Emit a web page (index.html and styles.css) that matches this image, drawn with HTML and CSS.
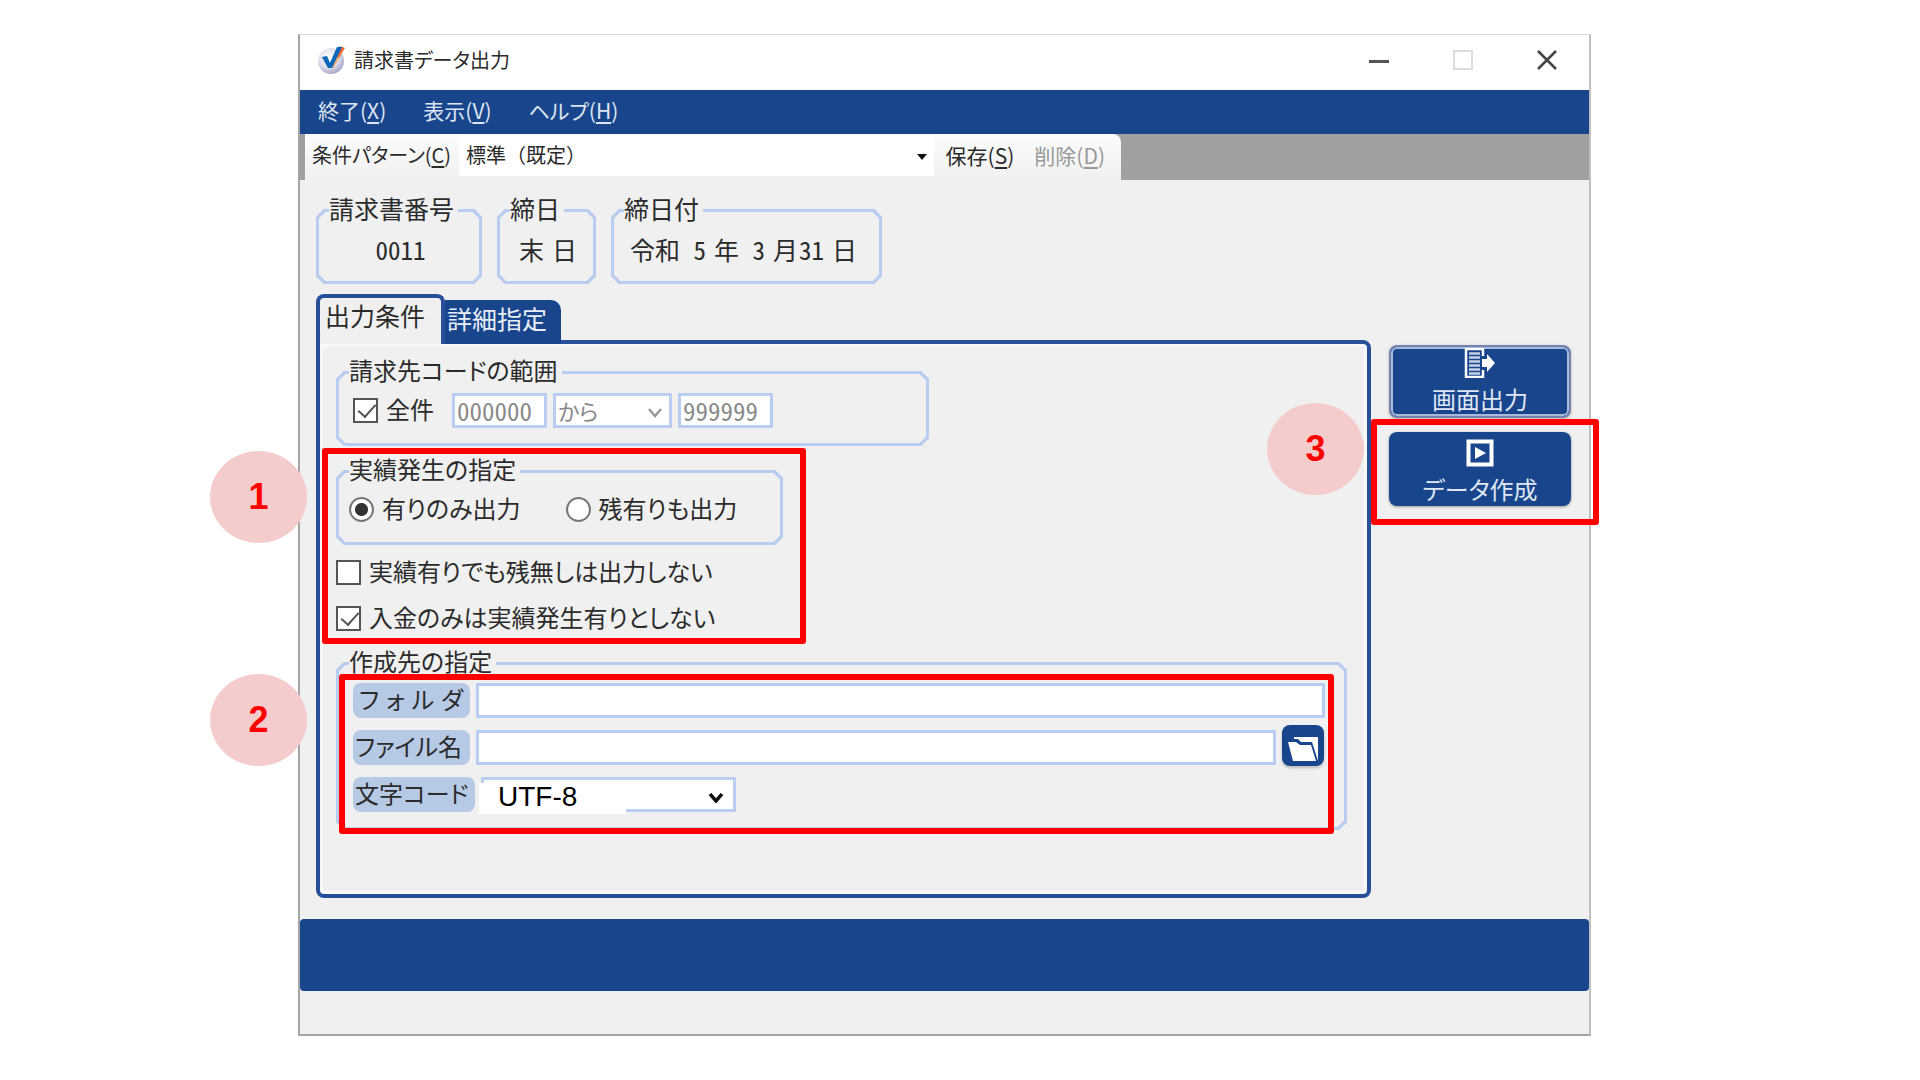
FILE: index.html
```html
<!DOCTYPE html>
<html lang="ja">
<head>
<meta charset="utf-8">
<title>請求書データ出力</title>
<link rel="stylesheet" href="styles.css">
</head>
<body>
<div class="stage">
  <div class="window">
    <header class="titlebar">
      <svg class="app-icon" viewBox="0 0 28 28" aria-hidden="true">
        <defs><radialGradient id="ball" cx="0.4" cy="0.35" r="0.65"><stop offset="0" stop-color="#fff"/><stop offset="0.65" stop-color="#dcdcea"/><stop offset="1" stop-color="#a9a9cc"/></radialGradient></defs>
        <circle cx="14" cy="15" r="13" fill="url(#ball)"/>
        <path d="M23 0l5 2-12 20-4-1z" fill="#f26a35"/>
        <path d="M13 22l7-12 2 2-6 10z" fill="#f8b070"/>
        <path d="M5 11l5-1 3 7L20 1h5L15 22h-4z" fill="#0a66b8"/>
      </svg>
      <h1 class="title">請求書データ出力</h1>
      <div class="window-buttons">
        <button type="button" class="window-button" aria-label="最小化"><svg viewBox="0 0 20 20"><path d="M0 11.500h20" stroke="#555" stroke-width="3"/></svg></button>
        <button type="button" class="window-button" aria-label="最大化" disabled><svg viewBox="0 0 20 20"><rect x="1" y="1" width="18" height="18" fill="none" stroke="#dcdcdc" stroke-width="2"/></svg></button>
        <button type="button" class="window-button" aria-label="閉じる"><svg viewBox="0 0 20 20"><path d="M1 1l18 18M19 1L1 19" stroke="#444" stroke-width="2.500"/></svg></button>
      </div>
    </header>

    <nav class="menubar">
      <button type="button" class="menu">終了(<u>X</u>)</button>
      <button type="button" class="menu">表示(<u>V</u>)</button>
      <button type="button" class="menu">ヘルプ(<u>H</u>)</button>
    </nav>

    <div class="toolbar">
      <div class="toolstrip">
        <label class="tool-label" for="pattern">条件パターン(<u>C</u>)</label>
        <div class="pattern">
          <select id="pattern" class="pattern-select"><option>標準（既定）</option></select>
          <svg class="pattern-arrow" viewBox="0 0 10 6" aria-hidden="true"><path d="M0 0h10L5 6z" fill="#111"/></svg>
        </div>
        <button type="button" class="tool">保存(<u>S</u>)</button>
        <button type="button" class="tool" disabled>削除(<u>D</u>)</button>
      </div>
    </div>

    <main class="content">
      <div class="summary">
        <fieldset class="group summary-number">
          <legend>請求書番号</legend>
          <div class="value">0011</div>
        </fieldset>
        <fieldset class="group summary-day">
          <legend>締日</legend>
          <div class="value value-spread"><span>末</span><span>日</span></div>
        </fieldset>
        <fieldset class="group summary-date">
          <legend>締日付</legend>
          <div class="value date"><span>令和</span><span class="date-number">5</span><span class="date-unit">年</span><span class="date-number">3</span><span class="date-unit">月</span><span class="date-number">31</span><span class="date-unit">日</span></div>
        </fieldset>
      </div>

      <div class="work">
        <div class="tabbed">
          <div class="tabs" role="tablist">
            <button type="button" role="tab" aria-selected="true" class="tab tab-active">出力条件</button>
            <button type="button" role="tab" aria-selected="false" class="tab">詳細指定</button>
          </div>

          <form class="panel">
            <fieldset class="group range">
              <legend>請求先コードの範囲</legend>
              <div class="range-row">
                <label class="choice"><input type="checkbox" class="check" checked><span class="choice-text">全件</span></label>
                <div class="range-fields">
                  <input type="text" class="field code" value="000000" aria-label="開始コード" disabled>
                  <div class="range-kind">
                    <select class="field range-select" aria-label="範囲の種類" disabled><option>から</option></select>
                    <svg class="chevron" viewBox="0 0 14 10" aria-hidden="true"><path d="M1 1l6 7 6-7" fill="none" stroke="#999" stroke-width="2.500"/></svg>
                  </div>
                  <input type="text" class="field code" value="999999" aria-label="終了コード" disabled>
                </div>
              </div>
            </fieldset>

            <div class="results">
              <fieldset class="group results-group">
                <legend>実績発生の指定</legend>
                <div class="radio-row">
                  <label class="choice"><input type="radio" name="results" class="radio" checked><span class="choice-text">有りのみ出力</span></label>
                  <label class="choice"><input type="radio" name="results" class="radio"><span class="choice-text">残有りも出力</span></label>
                </div>
              </fieldset>
              <label class="choice"><input type="checkbox" class="check"><span class="choice-text">実績有りでも残無しは出力しない</span></label>
              <label class="choice"><input type="checkbox" class="check" checked><span class="choice-text">入金のみは実績発生有りとしない</span></label>
              <div class="callout callout-results"></div>
              <div class="marker marker-left">1</div>
            </div>

            <fieldset class="group target">
              <legend>作成先の指定</legend>
              <div class="target-rows">
                <div class="target-row">
                  <label class="caption caption-spread" for="folder"><span>フ</span><span>ォ</span><span>ル</span><span>ダ</span></label>
                  <input type="text" id="folder" class="field grow">
                </div>
                <div class="target-row">
                  <label class="caption" for="file">ファイル名</label>
                  <input type="text" id="file" class="field grow">
                  <button type="button" class="browse" aria-label="参照">
                    <svg viewBox="0 0 30 26"><path d="M6 1h24v24L24 6H13l-3-3H6z" fill="#fff"/><path d="M0 6h8l4 3h11l5 16H5z" fill="#fff"/></svg>
                  </button>
                </div>
                <div class="target-row">
                  <label class="caption caption-wide" for="encoding">文字コード</label>
                  <div class="encoding">
                    <select id="encoding" class="encoding-select"><option>UTF-8</option></select>
                    <svg class="chevron" viewBox="0 0 14 10" aria-hidden="true"><path d="M1 1l6 7 6-7" fill="none" stroke="#111" stroke-width="3.500"/></svg>
                  </div>
                </div>
              </div>
              <div class="callout callout-target"></div>
              <div class="marker marker-target">2</div>
            </fieldset>
          </form>
        </div>

        <aside class="actions">
          <button type="button" class="action action-focus">
            <svg class="action-icon" viewBox="0 0 32 30"><path d="M19 8V1H2v28h17v-7" fill="none" stroke="#fff" stroke-width="2.500"/><path d="M5 5.500h11M5 9.500h11M5 13.500h11M5 17.500h11M5 21.500h11M5 25.500h11" stroke="#c5d1e6" stroke-width="2.500"/><path d="M18 11h5V6l8 9-8 9v-5h-5z" fill="#fff"/></svg>
            <span>画面出力</span>
          </button>
          <div class="action-marked">
            <button type="button" class="action">
              <svg class="action-icon" viewBox="0 0 32 30"><rect x="4.500" y="3.500" width="23" height="23" fill="none" stroke="#fff" stroke-width="4"/><path d="M11 9l11 6-11 6z" fill="#fff"/></svg>
              <span>データ作成</span>
            </button>
            <div class="callout callout-action"></div>
            <div class="marker marker-action">3</div>
          </div>
        </aside>
      </div>
    </main>

    <div class="band"></div>
    <footer class="status"></footer>
  </div>
</div>
</body>
</html>
```
FILE: styles.css
```css
:root {
  --blue: #19458d;
  --line: #b9cdf0;
  --face: #f0f0f0;
  --ink: #2b2b2b;
}

* {
  box-sizing: border-box;
}

body {
  margin: 0;
  background: #fff;
  color: var(--ink);
  font-family: "Noto Sans CJK JP", "Liberation Sans", sans-serif;
  font-size: 25px;
  line-height: 26px;
  font-feature-settings: "palt";
}

button,
input,
select {
  margin: 0;
  padding: 0;
  border: 0;
  border-radius: 0;
  background: none;
  color: inherit;
  font: inherit;
  font-feature-settings: inherit;
}

select {
  appearance: none;
}

u {
  text-underline-offset: 3px;
}

.stage {
  display: flex;
  min-height: 100vh;
  padding: 34px 329px 44px 298px;
}

.window {
  display: flex;
  flex: 1;
  flex-direction: column;
  min-width: 0;
  border: 2px solid #a5a5a5;
  border-top: 1px solid #d8d8d8;
  border-right-color: #c0c0c0;
  background: var(--face);
}

/* title bar */
.titlebar {
  display: flex;
  align-items: center;
  height: 55px;
  padding: 0 32px 5px 17px;
  background: #fff;
}

.app-icon {
  width: 28px;
  height: 28px;
}

.title {
  flex: 1;
  margin: 0 0 0 9px;
  font-size: 20px;
  font-weight: 400;
}

.window-buttons {
  display: flex;
  gap: 64px;
}

.window-button {
  width: 20px;
  height: 20px;
}

.window-button svg {
  display: block;
}

/* menu bar */
.menubar {
  display: flex;
  align-items: center;
  gap: 37px;
  height: 44px;
  padding: 0 18px 4px;
  background: var(--blue);
  color: #dde5f2;
  font-size: 21px;
}

/* tool bar */
.toolbar {
  display: flex;
  height: 46px;
  padding-left: 5px;
  background: #a0a0a0;
  font-size: 21px;
}

.toolstrip {
  display: flex;
  align-items: center;
  width: 816px;
  padding: 0 16px 4px 7px;
  border-radius: 0 8px 0 0;
  background: linear-gradient(#fcfcfc, #f0f0f0);
}

.tool-label {
  flex: none;
  width: 147px;
  font-size: 20px;
  white-space: nowrap;
}

.pattern {
  display: flex;
  position: relative;
  flex: 1;
  align-self: stretch;
  margin-right: 12px;
  background: #fff;
}

.pattern-select {
  width: 100%;
  padding-left: 7px;
  font-size: 20px;
  font-feature-settings: normal;
}

.pattern-arrow {
  position: absolute;
  top: 20px;
  right: 7px;
  width: 10px;
  height: 6px;
}

.tool + .tool {
  margin-left: 20px;
}

.tool:disabled {
  color: #999;
}

/* framed groups */
.content {
  flex: 1;
  padding: 17px 18px 21px 16px;
}

.group {
  position: relative;
  min-width: 0;
  margin: 0;
  padding: 8px 13px 15px 10px;
  border: 3px solid var(--line);
  border-radius: 8px;
  corner-shape: bevel;
}

.group legend {
  height: 26px;
  padding: 0 4px 0 0;
  line-height: 22px;
}

.panel .group legend {
  font-size: 24px;
}

.summary {
  display: flex;
  gap: 15px;
  height: 87px;
}

.summary-number {
  width: 166px;
}

.summary-day {
  width: 99px;
}

.summary-date {
  width: 271px;
}

.value {
  padding: 5px 0 0 6px;
  text-align: center;
  font-feature-settings: "hwid";
}

.value-spread {
  display: flex;
  justify-content: center;
  gap: 8px;
}

.date {
  display: flex;
}

.date-number {
  width: 26px;
  text-align: right;
}

.date-unit {
  padding-left: 8px;
}

/* tabs */
.work {
  display: flex;
  gap: 18px;
  margin-top: 10px;
}

.tabbed {
  display: flex;
  flex: 1;
  flex-direction: column;
  min-width: 0;
}

.tabs {
  display: flex;
  align-items: flex-end;
  position: relative;
  z-index: 1;
  height: 50px;
  margin-bottom: -4px;
}

.tab {
  height: 44px;
  padding: 0 14px 8px 2px;
  border-radius: 0 10px 0 0;
  background: var(--blue);
  color: #e8eef8;
}

.tab-active {
  height: 50px;
  padding: 0 16px 12px 5px;
  border: 4px solid #28509a;
  border-bottom: 0;
  border-radius: 8px 8px 0 0;
  background: var(--face);
  color: inherit;
}

.panel {
  display: flex;
  flex-direction: column;
  min-height: 558px;
  padding: 15px 20px 20px 16px;
  border: 4px solid #28509a;
  border-radius: 0 8px 8px 8px;
  box-shadow: inset 0 0 0 3px #f8f8f8;
}

/* form controls */
.choice {
  display: flex;
  align-items: center;
  gap: 8px;
  font-size: 24px;
}

.choice-text {
  padding-bottom: 3px;
}

.check,
.radio {
  flex: none;
  position: relative;
  width: 25px;
  height: 25px;
  appearance: none;
  border: 2px solid #555;
  background: #fff;
}

.radio {
  border-color: #777;
  border-radius: 50%;
}

.radio:checked {
  background: radial-gradient(circle, #333 6px, #fff 7px);
}

.check:checked::before {
  content: "";
  position: absolute;
  top: 0;
  left: 7px;
  width: 8px;
  height: 15px;
  border: solid #555;
  border-width: 0 2px 2px 0;
  transform: rotate(42deg);
}

.field {
  height: 35px;
  border: 3px solid var(--line);
  background: #fff;
}

.field:disabled {
  padding-bottom: 2px;
  color: #8a8a8a;
  opacity: 1;
}

.range {
  max-width: 593px;
}

.range-row {
  display: flex;
  gap: 18px;
  padding-left: 4px;
}

.range-fields {
  display: flex;
  gap: 6px;
}

.code {
  width: 95px;
  padding-left: 2px;
  font-feature-settings: "hwid";
}

.range-kind {
  display: flex;
  position: relative;
  width: 119px;
}

.range-select {
  width: 100%;
  padding-left: 2px;
  font-size: 22px;
}

.chevron {
  position: absolute;
  top: 15px;
  right: 10px;
  width: 14px;
  height: 10px;
}

.results {
  display: flex;
  flex-direction: column;
  position: relative;
  gap: 20px;
  margin-top: 12px;
}

.results-group {
  width: 447px;
  margin-bottom: -6px;
}

.radio-row {
  display: flex;
  align-items: center;
  gap: 45px;
  height: 35px;
}

.results .choice {
  height: 26px;
}

.target {
  margin-top: 19px;
  padding: 7px 19px 15px 10px;
}

.target-rows {
  display: flex;
  flex-direction: column;
  gap: 12px;
  padding-left: 4px;
}

.target-row {
  display: flex;
  gap: 6px;
  height: 35px;
}

.caption {
  flex: none;
  width: 117px;
  padding: 3px 2px;
  border-radius: 8px;
  background: #b7cae5;
  font-size: 24px;
  white-space: nowrap;
}

.caption-spread {
  display: flex;
  justify-content: space-between;
  padding-right: 7px;
  padding-left: 6px;
}

.caption-wide {
  width: 122px;
}

.grow {
  flex: 1;
  min-width: 0;
}

.browse {
  width: 42px;
  height: 41px;
  margin: -5px 1px 0 0;
  border-radius: 8px;
  background: var(--blue);
  box-shadow: 0 2px 3px #bbb;
}

.browse svg {
  display: block;
  width: 30px;
  height: 26px;
  margin: 6px 0 0 6px;
}

.encoding {
  display: flex;
  position: relative;
  width: 255px;
  border: 3px solid var(--line);
  background: #fff;
}

.encoding::before {
  content: "";
  position: absolute;
  top: 3px;
  left: -5px;
  width: 147px;
  height: 31px;
  background: #fff;
}

.encoding-select {
  position: relative;
  width: 100%;
  padding: 4px 0 0 14px;
  color: #000;
  font-family: "Liberation Sans", Arial, sans-serif;
  font-size: 28px;
}

.encoding .chevron {
  top: 13px;
}

/* action buttons */
.actions {
  display: flex;
  flex-direction: column;
  flex: none;
  gap: 14px;
  width: 182px;
  padding-top: 51px;
}

.action {
  display: flex;
  flex-direction: column;
  align-items: center;
  width: 100%;
  height: 74px;
  padding-top: 6px;
  border-radius: 8px;
  background: var(--blue);
  box-shadow: 0 1px 3px #999;
  color: #dfe7f4;
}

.action-focus {
  height: 73px;
  padding-top: 1px;
  border: 2px solid #6f82b2;
  box-shadow: inset 0 0 0 2px #a9b9da, 0 1px 3px #c9a9a0;
}

.action-icon {
  flex: none;
  width: 32px;
  height: 30px;
}

.action span {
  margin-top: 8px;
  font-size: 24px;
}

.action-marked {
  position: relative;
}

/* callouts laid over the window */
.callout {
  position: absolute;
  z-index: 2;
  border: 6px solid #f00;
  border-radius: 3px;
  pointer-events: none;
}

.callout-results {
  top: -10px;
  bottom: -13px;
  left: -14px;
  width: 484px;
}

.callout-target {
  top: -2px;
  right: 10px;
  bottom: -7px;
  left: 0;
}

.callout-action {
  inset: -13px -28px -19px -18px;
}

.marker {
  display: flex;
  align-items: center;
  justify-content: center;
  position: absolute;
  z-index: 2;
  width: 97px;
  height: 92px;
  border-radius: 50%;
  background: #f4cccc;
  color: #f00;
  font: bold 36px "Liberation Sans", Arial, sans-serif;
}

.marker-left {
  top: -7px;
  left: -126px;
}

.marker-target {
  top: -2px;
  left: -129px;
}

.marker-action {
  top: -29px;
  left: -122px;
}

/* bottom */
.band {
  height: 72px;
  border-radius: 4px;
  background: var(--blue);
}

.status {
  height: 43px;
}
```
